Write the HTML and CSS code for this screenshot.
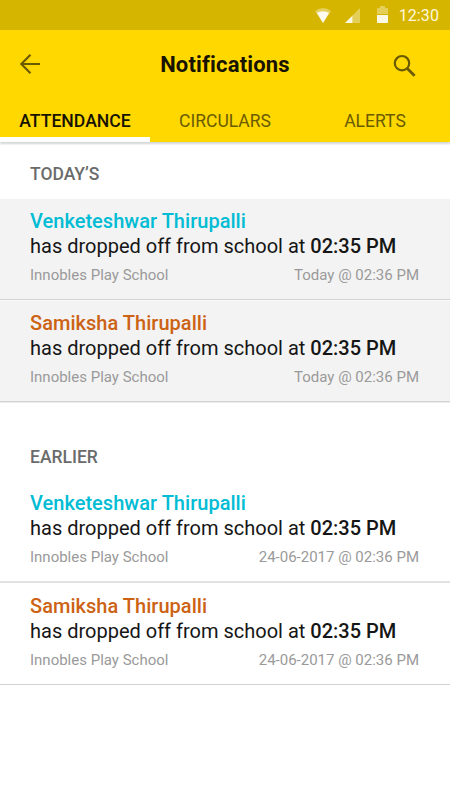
FILE: index.html
```
<!DOCTYPE html>
<html lang="en">
<head>
<meta charset="utf-8">
<title>Notifications</title>
<link rel="stylesheet" href="styles.css">
</head>
<body>
<div class="status">
  <svg class="wifi" width="16" height="15" viewBox="0 0 16 15"><path d="M0 3Q8-3 16 3L8 15Z" fill="#fff" opacity=".35"/><path d="M1.8 4.8Q8 1.6 14.2 4.8L8 15Z" fill="#fff" opacity=".9"/></svg>
  <svg class="signal" width="15" height="15" viewBox="0 0 15 15"><path d="M15 0V15H7.5V7.5Z" fill="#fff" opacity=".35"/><path d="M7.5 7.5V15H0Z" fill="#fff" opacity=".9"/></svg>
  <svg class="battery" width="11" height="17" viewBox="0 0 11 17"><path d="M3 0H8V2H10Q11 2 11 3V8H0V3Q0 2 1 2H3Z" fill="#fff" opacity=".35"/><path d="M0 9H11V16Q11 17 10 17H1Q0 17 0 16Z" fill="#fff" opacity=".9"/></svg>
  <span class="clock">12:30</span>
</div>
<header class="bar">
  <svg class="back" width="22" height="22" viewBox="0 0 22 22"><path d="M21 11H3M11.5 1.8L2.3 11L11.5 20.2" fill="none" stroke="#6b5b00" stroke-width="2.1"/></svg>
  <h1>Notifications</h1>
  <svg class="search" width="24" height="24" viewBox="0 0 24 24"><circle cx="9" cy="9.2" r="7.2" fill="none" stroke="#6b5b00" stroke-width="2.2"/><path d="M14.3 14.5L21.6 21.8" stroke="#6b5b00" stroke-width="2.8"/></svg>
</header>
<nav class="tabs"><a class="tab active"><span>ATTENDANCE</span></a><a class="tab"><span>CIRCULARS</span></a><a class="tab"><span>ALERTS</span></a></nav>
<main>
<section class="group today">
  <h2>TODAY’S</h2>
  <article class="item"><h3 class="cyan">Venketeshwar Thirupalli</h3><p>has dropped off from school at <b>02:35 PM</b></p><div class="meta"><span>Innobles Play School</span><span>Today @ 02:36 PM</span></div></article>
  <article class="item"><h3 class="orange">Samiksha Thirupalli</h3><p>has dropped off from school at <b>02:35 PM</b></p><div class="meta"><span>Innobles Play School</span><span>Today @ 02:36 PM</span></div></article>
</section>
<section class="group earlier">
  <h2>EARLIER</h2>
  <article class="item"><h3 class="cyan">Venketeshwar Thirupalli</h3><p>has dropped off from school at <b>02:35 PM</b></p><div class="meta"><span>Innobles Play School</span><span>24-06-2017 @ 02:36 PM</span></div></article>
  <article class="item"><h3 class="orange">Samiksha Thirupalli</h3><p>has dropped off from school at <b>02:35 PM</b></p><div class="meta"><span>Innobles Play School</span><span>24-06-2017 @ 02:36 PM</span></div></article>
</section>
</main>
</body>
</html>
```
FILE: styles.css
```
* { box-sizing: border-box; margin: 0; }
body { font-family: Roboto, sans-serif; background: #fff; height: 800px; overflow: hidden; }
svg { display: block; }
.status { height: 30px; background: #d6b500; display: flex; align-items: center; justify-content: flex-end; padding-right: 11px; color: #fff8dc; }
.signal { margin-left: 14px; }
.battery { margin-left: 17px; margin-top: -1px; }
.clock { margin-left: 11px; padding-top: 2px; font-size: 16px; letter-spacing: .1px; line-height: 28px; }
.bar { height: 68px; background: #ffd800; display: grid; grid-template-columns: 60px 1fr 60px; align-items: center; }
.back { margin-left: 19px; }
.search { margin-left: 3px; margin-top: 3px; }
h1 { font-size: 22px; font-weight: 700; line-height: 28px; padding-top: 2px; letter-spacing: .17px; color: #171300; text-align: center; }
.tabs { position: relative; height: 44px; background: #ffd800; display: flex; box-shadow: 0 2px 2px rgba(0,0,0,.17); }
.tab { flex: 1; display: flex; justify-content: center; border-bottom: 5px solid transparent; font-size: 17.5px; line-height: 46px; color: #6b5b00; }
.active { border-color: #fff; color: #171300; font-weight: 500; font-size: 17.6px; }
h2 { font-size: 17.5px; font-weight: 500; line-height: 24px; color: #6b6b6b; padding-left: 30px; }
.group h2 { height: 57px; padding-top: 20px; }
.earlier { padding-top: 22px; }
.item { height: 101px; padding: 9px 31px 0 30px; }
.item::after { content: ""; display: block; height: 1px; margin: 14px -31px 0 -30px; background: #d2d2d2; }
.today .item { padding-top: 10px; background: #f3f3f3; }
.today .item + .item { height: 103px; border-top: 1px solid #fafafa; border-bottom: 1px solid #ececec; }
.earlier .item:first-of-type::after { height: 2px; background: #e2e2e2; }
.earlier .item + .item { height: 104px; padding-top: 11px; }
h3 { font-size: 20px; font-weight: 500; line-height: 25px; letter-spacing: .03px; }
.cyan { color: #00bcd4; }
.orange { color: #cc6214; }
p { font-size: 20px; line-height: 25px; color: #161616; white-space: nowrap; }
b { font-weight: 500; }
.meta { display: flex; justify-content: space-between; font-size: 15px; line-height: 20px; margin-top: 6px; color: #9a9a9a; }
```
